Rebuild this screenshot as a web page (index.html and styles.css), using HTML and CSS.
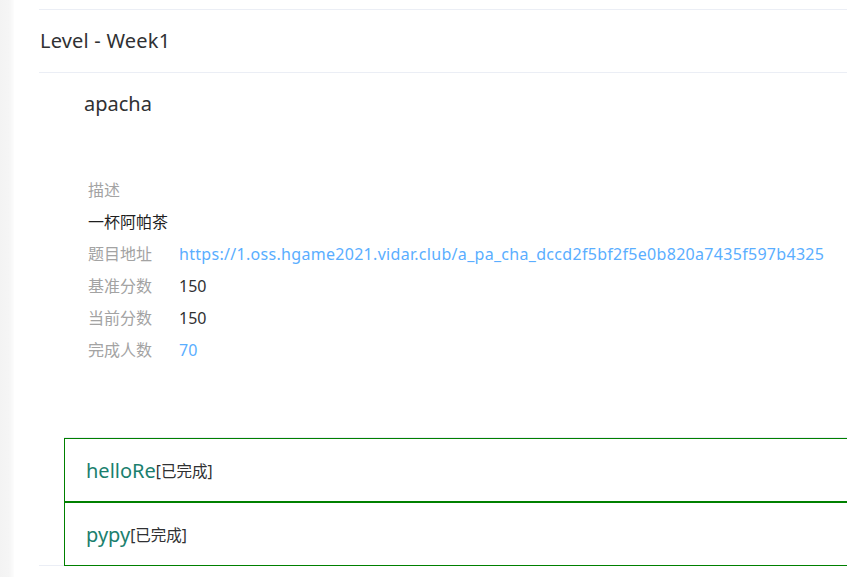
FILE: index.html
```html
<!DOCTYPE html>
<html lang="zh">
<head>
<meta charset="utf-8">
<title>Level - Week1</title>
<link rel="stylesheet" href="styles.css">
</head>
<body>
<div class="page">
  <div class="panel">
    <div class="collapse">
      <div class="collapse-header">Level - Week1</div>
      <div class="collapse-content">
        <div class="challenge">
          <div class="challenge-title">apacha</div>
          <div class="details">
            <div class="row"><span class="label">描述</span></div>
            <div class="row"><span class="desc">一杯阿帕茶</span></div>
            <div class="row"><span class="label">题目地址</span><a class="link" href="#">https://1.oss.hgame2021.vidar.club/a_pa_cha_dccd2f5bf2f5e0b820a7435f597b4325</a></div>
            <div class="row"><span class="label">基准分数</span><span class="value">150</span></div>
            <div class="row"><span class="label">当前分数</span><span class="value">150</span></div>
            <div class="row"><span class="label">完成人数</span><span class="value blue">70</span></div>
          </div>
        </div>
        <div class="solved-list">
          <div class="solved"><span class="solved-name">helloRe</span><span class="solved-tag">[已完成]</span></div>
          <div class="solved"><span class="solved-name">pypy</span><span class="solved-tag">[已完成]</span></div>
        </div>
      </div>
    </div>
  </div>
</div>
</body>
</html>
```
FILE: styles.css
```css
html, body {
  margin: 0;
  padding: 0;
  height: 100%;
  overflow: hidden;
}
body {
  background: linear-gradient(to right, #f3f3f3 0, #f5f5f5 9px, #fbfbfb 13px, #fff 15px);
  font-family: "Noto Sans", "Noto Sans CJK SC", sans-serif;
  color: #303133;
}
.page {
  height: 100%;
  padding-left: 14px;
}
.panel {
  height: 100%;
  background: #fff;
  padding: 9px 0 0 25px;
  box-sizing: border-box;
}
.collapse {
  border-top: 1px solid #ebeef5;
  border-bottom: 1px solid #ebeef5;
}
.collapse-header {
  height: 62px;
  line-height: 62px;
  font-size: 20px;
  letter-spacing: 0.2px;
  color: #303133;
  padding-left: 1px;
  border-bottom: 1px solid #ebeef5;
}
.collapse-content {
  padding-left: 25px;
}
.challenge {
  padding: 17px 0 0 20px;
}
.challenge-title {
  font-size: 20px;
  line-height: 28px;
  color: #303133;
}
.details {
  padding: 56px 0 71px 4px;
}
.row {
  display: flex;
  height: 32px;
  line-height: 32px;
  font-size: 16px;
  white-space: nowrap;
}
.label {
  width: 91px;
  color: #a3a3a3;
  flex: none;
}
.desc {
  color: #1f1f1f;
}
.value {
  color: #303133;
}
.blue, .link {
  color: #5aaeff;
  text-decoration: none;
}
.link {
  letter-spacing: 0.3px;
}
.solved-list {
  border-top: 1px solid #ebeef5;
  margin-bottom: -1px;
}
.solved {
  height: 62px;
  border: 1px solid #008000;
  display: flex;
  align-items: center;
  padding-left: 21px;
  margin-right: -20px;
}
.solved:first-child {
  margin-top: 0;
}
.solved-name {
  font-size: 20px;
  color: #1b7f6e;
}
.solved-tag {
  font-size: 15.5px;
  color: #303133;
}
```
